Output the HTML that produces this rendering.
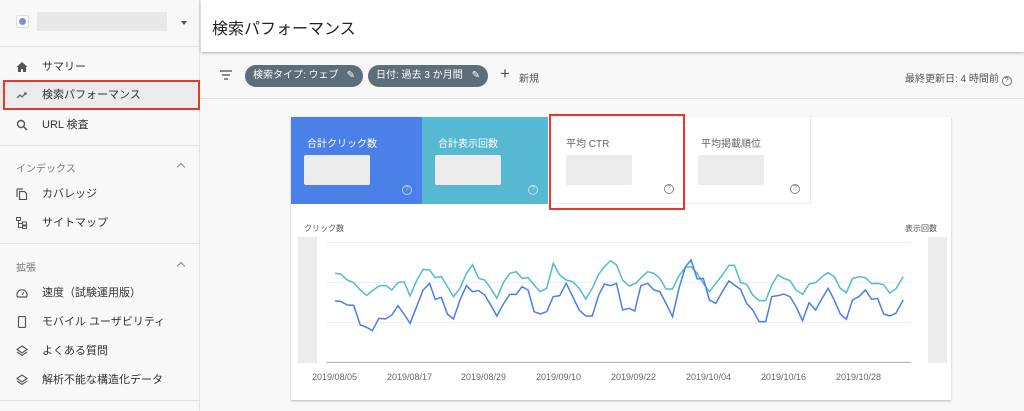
<!DOCTYPE html>
<html><head><meta charset="utf-8"><style>
*{margin:0;padding:0;box-sizing:border-box}
body{width:1024px;height:411px;overflow:hidden;background:#f8f8f8;font-family:"Liberation Sans","Noto Sans CJK JP",sans-serif;color:#333;position:relative}
.abs{position:absolute}
.side{left:0;top:0;width:200px;height:411px;background:#f8f8f8;border-right:1px solid #e3e3e3}
.item{position:absolute;left:0;width:200px;height:28px;font-size:11px;color:#333;line-height:28px;padding-left:42px}
.ico{position:absolute;left:16px;top:8px;width:12px;height:12px}
.sec{position:absolute;left:16px;font-size:10px;color:#777}
.chev{position:absolute;left:178px;width:6px;height:6px;border-left:1.3px solid #888;border-top:1.3px solid #888;transform:rotate(45deg)}
.hr{position:absolute;left:0;width:200px;height:1px;background:#e2e2e2}
.chip{position:absolute;top:65px;height:22px;border-radius:11px;background:#5b6e7a;color:#fff;font-size:10px;line-height:22px;padding-left:8px}
.lbl{font-size:10px;color:#fff;position:absolute;left:16px;top:18px}
.blur{position:absolute;left:13px;top:38px;width:66px;height:30px;background:#ececec;border-radius:2px}
.q{position:absolute;right:10px;bottom:9px;width:10px;height:10px;border:1px solid;border-radius:50%;font-size:7px;line-height:8px;text-align:center}
.d{position:absolute;top:372px;font-size:9px;color:#666}
</style></head><body>
<div class="abs side">
  <div class="abs" style="left:16px;top:15px;width:13px;height:13px;border:1px solid #ddd;background:#fff;border-radius:2px"><div style="margin:2px;width:7px;height:7px;border-radius:50%;background:#7c8fd0"></div></div>
  <div class="abs" style="left:37px;top:12px;width:130px;height:19px;background:#e8e8e8"></div>
  <div class="abs" style="left:181px;top:21px;border:3px solid transparent;border-top:4px solid #555"></div>
  <div class="hr" style="top:46px"></div>
  <div class="item" style="top:53px"><svg class="ico" viewBox="0 0 12 12"><path d="M6 1L0.5 6H2v5h3V8h2v3h3V6h1.5z" fill="#555"/></svg>サマリー</div>
  <div class="item" style="top:81px;background:#ebebeb"><svg class="ico" viewBox="0 0 12 12"><path d="M1 9l3-3 2 2 4-4M8 4h2v2" stroke="#5b6e7a" fill="none" stroke-width="1.3"/></svg>検索パフォーマンス</div>
  <div class="abs" style="left:3px;top:80px;width:197px;height:30px;border:2px solid #e8372a"></div>
  <div class="item" style="top:111px"><svg class="ico" viewBox="0 0 12 12"><circle cx="5" cy="5" r="3.5" stroke="#555" fill="none" stroke-width="1.4"/><path d="M7.5 7.5L11 11" stroke="#555" stroke-width="1.5"/></svg>URL 検査</div>
  <div class="hr" style="top:145px"></div>
  <div class="sec" style="top:160px">インデックス</div><div class="chev" style="top:164px"></div>
  <div class="item" style="top:180px"><svg class="ico" viewBox="0 0 12 12"><path d="M1 1v8M1 1h6M3.5 3.5h5l2 2v6h-7z" stroke="#555" fill="none" stroke-width="1.2"/></svg>カバレッジ</div>
  <div class="item" style="top:209px"><svg class="ico" viewBox="0 0 12 12"><rect x="0.5" y="0.5" width="4" height="3" stroke="#555" fill="none"/><rect x="6.5" y="5" width="4" height="3" stroke="#555" fill="none"/><rect x="6.5" y="9" width="4" height="2.5" stroke="#555" fill="none"/><path d="M2.5 3.5v7h4M2.5 6.5h4" stroke="#555" fill="none"/></svg>サイトマップ</div>
  <div class="hr" style="top:243px"></div>
  <div class="sec" style="top:259px">拡張</div><div class="chev" style="top:263px"></div>
  <div class="item" style="top:279px"><svg class="ico" viewBox="0 0 12 12"><path d="M1.5 10a5 5 0 1 1 9 0z" stroke="#555" fill="none" stroke-width="1.2"/><path d="M6 8l2-3" stroke="#555"/></svg>速度（試験運用版）</div>
  <div class="item" style="top:308px"><svg class="ico" viewBox="0 0 12 12"><rect x="2.5" y="0.5" width="7" height="11" rx="1" stroke="#555" fill="none" stroke-width="1.2"/></svg>モバイル ユーザビリティ</div>
  <div class="item" style="top:337px"><svg class="ico" viewBox="0 0 12 12"><path d="M6 1l5 3.5-5 3.5-5-3.5z M1 7l5 3.5 5-3.5" stroke="#555" fill="none" stroke-width="1.1"/></svg>よくある質問</div>
  <div class="item" style="top:366px"><svg class="ico" viewBox="0 0 12 12"><path d="M6 1l5 3.5-5 3.5-5-3.5z M1 7l5 3.5 5-3.5" stroke="#555" fill="none" stroke-width="1.1"/></svg>解析不能な構造化データ</div>
  <div class="hr" style="top:400px"></div>
</div>
<div class="abs" style="left:201px;top:0;width:823px;height:52px;background:#fff;box-shadow:0 1px 3px rgba(0,0,0,.3)"></div>
<div class="abs" style="left:212px;top:15px;font-size:16px;color:#222">検索パフォーマンス</div>
<div class="abs" style="left:201px;top:98px;width:823px;height:1px;background:#e0e0e0"></div>
<svg class="abs" style="left:220px;top:70px" width="12" height="10"><path d="M0 1h12M2 5h8M4 9h4" stroke="#666" stroke-width="1.4"/></svg>
<div class="chip" style="left:245px;width:118px">検索タイプ: ウェブ <span style="position:absolute;right:8px">✎</span></div>
<div class="chip" style="left:368px;width:120px">日付: 過去 3 か月間 <span style="position:absolute;right:8px">✎</span></div>
<div class="abs" style="left:500px;top:64px;font-size:17px;color:#555;line-height:20px">+</div>
<div class="abs" style="left:519px;top:70px;font-size:10px;color:#555">新規</div>
<div class="abs" style="left:905px;top:70px;font-size:10px;color:#555">最終更新日: 4 時間前 <span style="display:inline-block;width:10px;height:10px;border:1px solid #777;border-radius:50%;font-size:7px;line-height:8px;text-align:center">?</span></div>

<div class="abs" style="left:291px;top:117px;width:660px;height:283px;background:#fff;box-shadow:0 1px 2px rgba(0,0,0,.25)"></div>
<div class="abs" style="left:291px;top:117px;width:131px;height:87px;background:#4a80e8"><div class="lbl">合計クリック数</div><div class="blur"></div><div class="q" style="color:#b8cdf5">?</div></div>
<div class="abs" style="left:422px;top:117px;width:126px;height:87px;background:#56b8d1"><div class="lbl">合計表示回数</div><div class="blur"></div><div class="q" style="color:#bfe4ee">?</div></div>
<div class="abs" style="left:548px;top:117px;width:136px;height:87px;background:#fff;border-bottom:1px solid #eee"><div class="lbl" style="color:#666;left:18px">平均 CTR</div><div class="blur" style="left:18px"></div><div class="q" style="color:#888">?</div></div>
<div class="abs" style="left:684px;top:117px;width:127px;height:87px;background:#fff;border:1px solid #eee;border-top:none"><div class="lbl" style="color:#666">平均掲載順位</div><div class="blur"></div><div class="q" style="color:#888">?</div></div>
<div class="abs" style="left:549px;top:114px;width:136px;height:96px;border:2px solid #e8372a"></div>
<div class="abs" style="left:304px;top:223px;font-size:8px;color:#555">クリック数</div>
<div class="abs" style="left:905px;top:223px;font-size:8px;color:#555">表示回数</div>
<div class="abs" style="left:298px;top:237px;width:19px;height:126px;background:#ececec"></div>
<div class="abs" style="left:928px;top:237px;width:19px;height:126px;background:#ececec"></div>
<svg class="abs" style="left:280px;top:110px" width="680" height="300" viewBox="0 0 1568 900" preserveAspectRatio="none">
<path d="M107 397H1455M107 517H1455M107 637H1455" stroke="#eee" vector-effect="non-scaling-stroke"/>
<path d="M107 757H1455" stroke="#aaa" vector-effect="non-scaling-stroke"/>
<polyline fill="none" stroke="#4fbccf" stroke-width="1.5" vector-effect="non-scaling-stroke" points="127,490 140,492 155,510 170,518 185,540 200,556 215,540 230,527 245,527 258,540 272,518 286,515 300,558 315,512 330,478 345,480 358,503 372,500 386,530 400,560 415,535 430,490 444,464 458,505 472,510 486,535 500,565 515,518 530,490 545,485 558,505 572,503 586,525 600,545 615,535 630,460 645,495 660,510 675,515 690,535 705,567 720,535 735,492 748,470 762,452 776,465 790,510 805,528 820,520 835,500 848,485 862,490 876,505 890,537 905,537 920,497 935,472 948,470 962,490 976,520 990,545 1005,520 1020,495 1035,466 1048,466 1062,517 1076,523 1090,555 1105,572 1120,572 1134,525 1148,495 1162,505 1176,512 1190,540 1205,553 1220,522 1235,518 1250,500 1264,488 1278,500 1292,535 1306,548 1320,506 1335,500 1350,503 1364,521 1378,520 1392,524 1406,549 1420,537 1437,500"/>
<polyline fill="none" stroke="#4a7ee8" stroke-width="1.5" vector-effect="non-scaling-stroke" points="127,573 140,574 155,585 170,586 185,645 200,652 213,662 228,625 243,627 258,615 272,587 286,612 300,640 315,590 330,540 345,520 358,568 372,562 386,612 400,627 415,570 430,527 444,545 458,542 472,555 486,585 500,618 515,582 530,553 545,553 558,530 572,540 586,605 600,612 615,605 630,560 645,557 660,520 675,560 690,600 705,618 720,618 735,555 748,522 762,527 776,520 790,600 805,595 818,603 832,527 848,520 862,540 876,545 890,580 905,620 920,535 935,470 948,450 962,507 976,505 990,570 1005,580 1020,545 1035,513 1048,525 1062,538 1076,580 1090,600 1105,635 1120,635 1134,560 1148,557 1162,552 1176,560 1190,590 1205,632 1220,578 1235,600 1250,565 1264,535 1278,570 1292,612 1306,628 1320,570 1335,560 1350,540 1364,568 1378,565 1392,612 1406,618 1420,610 1437,570"/>
</svg>
<div class="d" style="left:312px">2019/08/05</div>
<div class="d" style="left:387px">2019/08/17</div>
<div class="d" style="left:461px">2019/08/29</div>
<div class="d" style="left:536px">2019/09/10</div>
<div class="d" style="left:611px">2019/09/22</div>
<div class="d" style="left:686px">2019/10/04</div>
<div class="d" style="left:761px">2019/10/16</div>
<div class="d" style="left:836px">2019/10/28</div>
</body></html>
